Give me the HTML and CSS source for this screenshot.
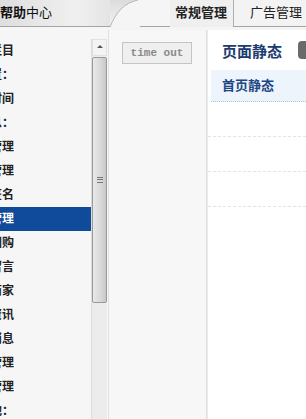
FILE: index.html
```html
<!DOCTYPE html>
<html lang="zh-CN">
<head>
  <meta charset="UTF-8" />
  <title>常规管理</title>
  <link rel="stylesheet" href="styles.css">
</head>
<body>

  <!-- Top bar -->
  <div class="header">
    <div class="brand"><b>帮助</b>中心</div>
    <svg class="curve" width="30" height="27" viewBox="0 0 30 27">
      <path d="M0 27 C6 12 14 3 28 0 L30 0 L30 27 Z" fill="#f5f5f5"/>
      <path d="M0 27 C6 12 14 3 28 0" fill="none" stroke="#b8b8b8" stroke-width="1"/>
    </svg>
    <div class="gap"></div>
    <div class="tab active">常规管理</div>
    <div class="tab">广告管理</div>
  </div>

  <div class="main">
    <!-- Left menu -->
    <div class="sidebar">
      <ul class="menu">
        <li><span>栏目</span></li>
        <li><span>设置：</span></li>
        <li><span>时间</span></li>
        <li><span>信息：</span></li>
        <li><span>会员管理</span></li>
        <li><span>订单管理</span></li>
        <li><span>签名</span></li>
        <li class="selected"><span>文章管理</span></li>
        <li><span>团购</span></li>
        <li><span>留言</span></li>
        <li><span>商家</span></li>
        <li><span>资讯</span></li>
        <li><span>消息</span></li>
        <li><span>广告管理</span></li>
        <li><span>链接管理</span></li>
        <li><span>其他：</span></li>
      </ul>
      <div class="scrollbar">
        <div class="arrow"></div>
        <div class="thumb"><i></i></div>
      </div>
    </div>

    <!-- Middle -->
    <div class="middle">
      <div class="timeout">time out</div>
    </div>

    <!-- Content -->
    <div class="content">
      <div class="title-row">
        <h2>页面静态</h2>
        <span class="btn"></span>
      </div>
      <div class="row first">首页静态</div>
      <div class="row"></div>
      <div class="row"></div>
      <div class="row"></div>
    </div>
  </div>

</body>
</html>
```

FILE: styles.css
```css
* {
  margin: 0;
  padding: 0;
  box-sizing: border-box;
}

body {
  font-family: "Liberation Sans", "Noto Sans CJK SC", sans-serif;
  font-size: 12px;
  color: #222;
  background: #f4f4f4;
  width: 306px;
  height: 419px;
  overflow: hidden;
}

.header {
  display: flex;
  height: 27px;
  background: linear-gradient(to bottom, #dcdcdc, #f2f2f2);
  border-bottom: 1px solid #a4a4a4;
}

.brand {
  width: 110px;
  font-size: 13px;
  line-height: 25px;
  color: #111;
  white-space: nowrap;
  background: linear-gradient(to right, #dedede, #f0f0f0 70%, #e4e4e4);
}

.curve {
  display: block;
  flex: none;
}

.gap {
  flex: 1;
  background: #f5f5f5;
}

.tab {
  width: 73px;
  padding-left: 16px;
  font-size: 13px;
  line-height: 26px;
  color: #222;
  background: #f3f3f3;
  border-left: 1px solid #b0b0b0;
}

.tab.active {
  width: 63px;
  padding-left: 5px;
  font-weight: bold;
  border-left: none;
  background: #efefef;
  margin-bottom: -1px;
}

.main {
  display: flex;
  height: 392px;
}

.sidebar {
  display: flex;
  width: 108px;
  padding-top: 12px;
  background: #f6f6f6;
}

.menu {
  list-style: none;
  width: 91px;
}

.menu li {
  height: 24px;
  display: flex;
  justify-content: flex-end;
  width: 14px;
  overflow: hidden;
  font-size: 12px;
  font-weight: bold;
  line-height: 24px;
  white-space: nowrap;
  color: #222;
}

.menu li.selected {
  width: 91px;
  background: #0f4a9b;
  color: #fff;
}

.menu li.selected span {
  width: 14px;
  display: flex;
  justify-content: flex-end;
  overflow: hidden;
  flex: none;
  margin-right: 77px;
}

.scrollbar {
  width: 16px;
  background: #ececec;
  border-left: 1px solid #dcdcdc;
}

.arrow {
  height: 17px;
  border: 1px solid #e2e2e2;
  background: #f4f4f4;
  position: relative;
}

.arrow::after {
  content: "";
  position: absolute;
  left: 4px;
  top: 5px;
  border-left: 3px solid transparent;
  border-right: 3px solid transparent;
  border-bottom: 3px solid #555;
}

.thumb {
  height: 246px;
  margin: 1px 0 0 0;
  border: 1px solid #9a9a9a;
  border-radius: 2px;
  background: linear-gradient(to right, #e8e8e8, #d8d8d8 60%, #c8c8c8);
  display: flex;
  align-items: center;
  justify-content: center;
}

.thumb i {
  width: 6px;
  height: 6px;
  border-top: 1px solid #777;
  border-bottom: 1px solid #777;
  position: relative;
}

.thumb i::after {
  content: "";
  position: absolute;
  left: 0;
  right: 0;
  top: 1px;
  border-top: 1px solid #777;
}

.middle {
  width: 99px;
  margin-top: 3px;
  background: #f7f7f7;
  border-left: 1px solid #e0e0e0;
  border-right: 1px solid #dedede;
  padding: 12px 0 0 13px;
}

.timeout {
  width: 70px;
  height: 22px;
  border: 1px solid #c4c4c4;
  background: #efefef;
  font-family: "Liberation Mono", monospace;
  font-size: 11px;
  font-weight: bold;
  color: #8a8a8a;
  text-align: center;
  line-height: 20px;
}

.content {
  flex: 1;
  margin-top: 3px;
  background: #fff;
  border-left: 1px solid #ececec;
}

.title-row {
  display: flex;
  justify-content: space-between;
  align-items: center;
  height: 40px;
  padding-left: 14px;
}

.title-row h2 {
  font-size: 15px;
  font-weight: bold;
  color: #1b3c70;
}

.btn {
  width: 8px;
  height: 18px;
  background: #6a6a6a;
  border-radius: 4px 0 0 4px;
}

.row {
  height: 35px;
  border-bottom: 1px dashed #e4e4e4;
}

.row.first {
  height: 32px;
  margin-left: 3px;
  padding-left: 11px;
  background: #eef4fb;
  border-bottom: 1px dotted #a8c4e0;
  font-size: 13px;
  font-weight: bold;
  color: #1c4784;
  line-height: 31px;
}
```
